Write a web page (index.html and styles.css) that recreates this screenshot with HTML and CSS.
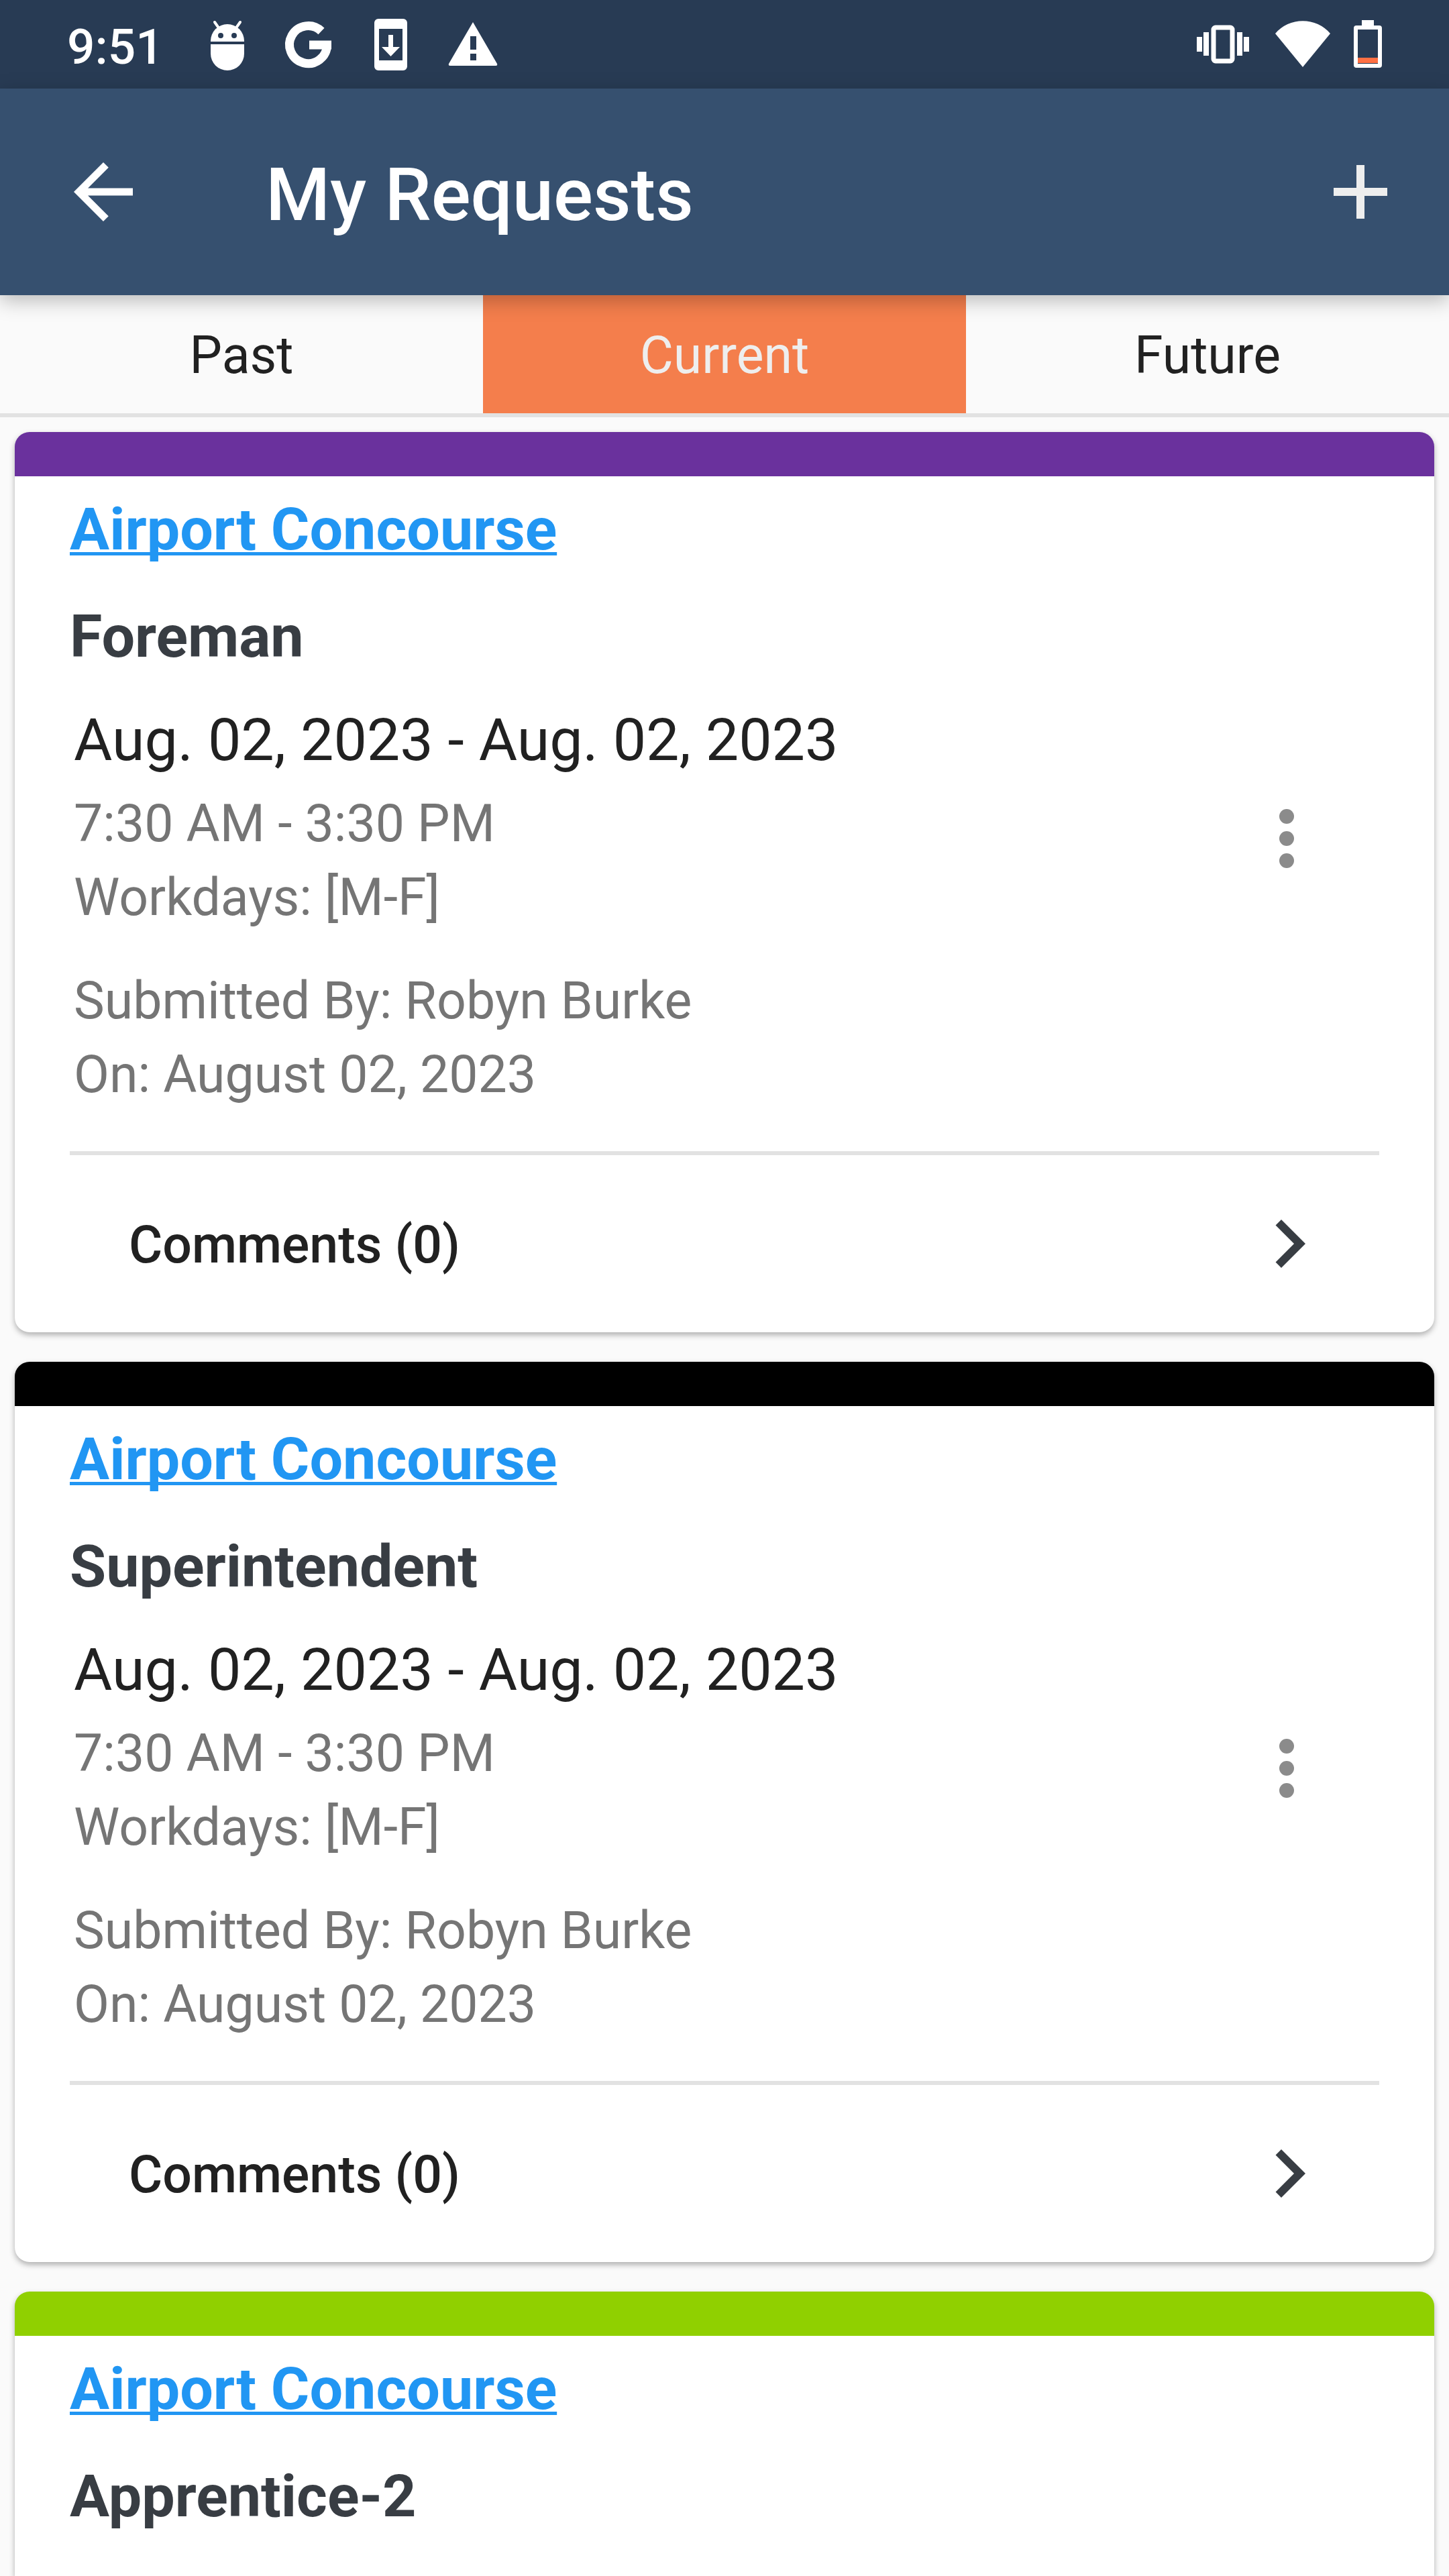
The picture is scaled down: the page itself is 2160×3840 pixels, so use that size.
FILE: index.html
```
<!DOCTYPE html>
<html lang="en">
<head>
  <meta charset="UTF-8" />
  <meta name="viewport" content="width=device-width, initial-scale=1.0" />
  <title>My Requests</title>
  <link rel="stylesheet" href="styles.css">
</head>
<body>

  <div class="status-bar">
    <span class="status-time">9:51</span>
    <div class="status-left">
      <!-- android -->
      <svg width="88" height="88" viewBox="0 0 88 88" fill="#fff">
        <path d="M19 40v-1a25 25 0 0 1 50 0v1z"/>
        <path d="M19 44h50v14a25 25 0 0 1-50 0z"/>
        <path d="M25 11l7 10M63 11l-7 10" stroke="#fff" stroke-width="4" stroke-linecap="round"/>
        <circle cx="34" cy="31" r="4" fill="#283b54"/>
        <circle cx="54" cy="31" r="4" fill="#283b54"/>
      </svg>
      <!-- google -->
      <svg width="88" height="88" viewBox="0 0 88 88" fill="none" stroke="#fff" stroke-width="13">
        <path d="M62 24.500A28 28 0 1 0 70.500 45"/>
        <path d="M44 45h33"/>
      </svg>
      <!-- system update -->
      <svg width="88" height="88" viewBox="0 0 88 88" fill="#fff">
        <path fill-rule="evenodd" d="M25 6h37a6 6 0 0 1 6 6v65a6 6 0 0 1-6 6H25a6 6 0 0 1-6-6V12a6 6 0 0 1 6-6zM26 21v47h35V21z"/>
        <path d="M40 30h7v18h10L43.500 62 30 48h10z"/>
      </svg>
      <!-- warning -->
      <svg width="88" height="88" viewBox="0 0 88 88" fill="#fff">
        <path fill-rule="evenodd" d="M44 11l36 62q1 3-2 3H10q-3 0-2-3zM40 32v20h9V32zM40 58v10h9V58z"/>
      </svg>
    </div>
    <div class="status-right">
      <!-- vibrate -->
      <svg width="82" height="58" viewBox="0 0 82 58" fill="#fff">
        <rect x="0" y="18" width="8" height="22"/>
        <rect x="10" y="11" width="8" height="35"/>
        <rect x="60" y="11" width="8" height="35"/>
        <rect x="70" y="18" width="8" height="22"/>
        <rect x="25" y="4" width="28" height="50" rx="3" fill="none" stroke="#fff" stroke-width="7"/>
      </svg>
      <!-- wifi -->
      <svg width="82" height="70" viewBox="0 0 82 70" fill="#fff">
        <path d="M0 19a54 54 0 0 1 82 0L41 69z"/>
      </svg>
      <!-- battery -->
      <svg width="42" height="72" viewBox="0 0 42 72" fill="#fff">
        <rect x="12" y="0" width="18" height="10"/>
        <rect x="3" y="11" width="36" height="57" rx="1" fill="none" stroke="#fff" stroke-width="6"/>
        <rect x="6" y="56" width="30" height="8" fill="#ff7043"/>
      </svg>
    </div>
  </div>

  <header class="app-bar">
    <button class="icon-btn" type="button" aria-label="Back">
      <svg width="132" height="132" viewBox="0 0 24 24" fill="#fff">
        <path d="M20 11H7.830l5.590-5.590L12 4l-8 8 8 8 1.410-1.410L7.830 13H20z"/>
      </svg>
    </button>
    <h1>My Requests</h1>
    <button class="icon-btn" type="button" aria-label="Add request">
      <svg width="132" height="132" viewBox="0 0 132 132" stroke="#eee" stroke-width="12">
        <path d="M66 26v80M26 66h80"/>
      </svg>
    </button>
  </header>

  <nav class="tabs">
    <button type="button">Past</button>
    <button type="button" class="active">Current</button>
    <button type="button">Future</button>
  </nav>

  <main class="requests">
    <article class="card foreman">
      <div class="card-body">
        <a class="project" href="#">Airport Concourse</a>
        <h2>Foreman</h2>
        <div class="details">
          <div class="details-text">
            <p class="dates">Aug. 02, 2023 - Aug. 02, 2023</p>
            <p>7:30 AM - 3:30 PM</p>
            <p>Workdays: [M-F]</p>
            <p class="submitted">Submitted By: Robyn Burke</p>
            <p>On: August 02, 2023</p>
          </div>
          <button class="icon-btn more" type="button" aria-label="More options">
            <svg width="132" height="132" viewBox="0 0 24 24" fill="#8b8b8b">
              <circle cx="12" cy="6" r="2"/><circle cx="12" cy="12" r="2"/><circle cx="12" cy="18" r="2"/>
            </svg>
          </button>
        </div>
        <button class="comments" type="button">
          <span>Comments (0)</span>
          <svg width="144" height="144" viewBox="0 0 24 24" fill="#383d43">
            <path d="M10 6L8.590 7.410 13.170 12l-4.580 4.590L10 18l6-6z"/>
          </svg>
        </button>
      </div>
    </article>

    <article class="card superintendent">
      <div class="card-body">
        <a class="project" href="#">Airport Concourse</a>
        <h2>Superintendent</h2>
        <div class="details">
          <div class="details-text">
            <p class="dates">Aug. 02, 2023 - Aug. 02, 2023</p>
            <p>7:30 AM - 3:30 PM</p>
            <p>Workdays: [M-F]</p>
            <p class="submitted">Submitted By: Robyn Burke</p>
            <p>On: August 02, 2023</p>
          </div>
          <button class="icon-btn more" type="button" aria-label="More options">
            <svg width="132" height="132" viewBox="0 0 24 24" fill="#8b8b8b">
              <circle cx="12" cy="6" r="2"/><circle cx="12" cy="12" r="2"/><circle cx="12" cy="18" r="2"/>
            </svg>
          </button>
        </div>
        <button class="comments" type="button">
          <span>Comments (0)</span>
          <svg width="144" height="144" viewBox="0 0 24 24" fill="#383d43">
            <path d="M10 6L8.590 7.410 13.170 12l-4.580 4.590L10 18l6-6z"/>
          </svg>
        </button>
      </div>
    </article>

    <article class="card apprentice">
      <div class="card-body">
        <a class="project" href="#">Airport Concourse</a>
        <h2>Apprentice-2</h2>
      </div>
    </article>
  </main>

</body>
</html>
```
FILE: styles.css
```
* {
    box-sizing: border-box;
}

body {
    margin: 0;
    min-height: 100vh;
    display: flex;
    flex-direction: column;
    background: #fafafa;
    color: #212121;
    font-family: Roboto, sans-serif;
    font-size: 77px;
}

h1, h2, p {
    margin: 0;
}

svg {
    display: block;
    flex: none;
}

button {
    padding: 0;
    border: none;
    background: none;
    color: inherit;
    font: inherit;
    cursor: pointer;
}

/* phone status bar */
.status-bar {
    display: flex;
    align-items: center;
    height: 132px;
    padding: 0 100px;
    background: #283b54;
    color: #fff;
}
.status-time {
    padding-top: 8px;
    margin-right: 51px;
    font-size: 73px;
    font-weight: 500;
}
.status-left {
    display: flex;
    gap: 34px;
}
.status-right {
    display: flex;
    align-items: center;
    gap: 35px;
    margin-left: auto;
}

/* title bar */
.app-bar {
    position: relative;
    z-index: 1;
    display: flex;
    align-items: center;
    height: 308px;
    padding: 0 66px 0 88px;
    background: #36506f;
    color: #fff;
    box-shadow: 0 8px 28px rgba(0, 0, 0, 0.26);
}
.app-bar h1 {
    flex: 1;
    padding-top: 8px;
    margin-left: 176px;
    font-size: 110px;
    font-weight: 500;
}

.tabs {
    display: grid;
    grid-template-columns: repeat(3, 1fr);
    border-bottom: 6px solid #e2e2e2;
}
.tabs button {
    height: 176px;
    padding-top: 4px;
}
.tabs .active {
    background: #f47e4c;
    color: #eee;
}

/* request cards */
.requests {
    flex: 1;
    display: flex;
    flex-direction: column;
    gap: 44px;
    padding: 22px 22px 0;
}
.card {
    border-top: 66px solid;
    border-radius: 22px;
    background: #fff;
    box-shadow: 0 4px 8px rgba(0, 0, 0, 0.3);
}
.card.foreman {
    border-color: #6a319d;
}
.card.superintendent {
    border-color: #000;
}
.card.apprentice {
    flex: 1;
    border-color: #90d000;
    border-radius: 22px 22px 0 0;
}
.card-body {
    padding: 27px 82px 0;
}
.project {
    display: inline-block;
    color: #2196f3;
    font-size: 88px;
    font-weight: bold;
    line-height: 104px;
    text-decoration-thickness: 5px;
    text-underline-offset: 4px;
    text-decoration-skip-ink: none;
    vertical-align: top;
}
.card h2 {
    margin-top: 56px;
    color: #383d43;
    font-size: 88px;
    line-height: 104px;
}

.details {
    display: flex;
    align-items: flex-start;
    justify-content: space-between;
    padding: 50px 72px 59px 6px;
    border-bottom: 6px solid #e2e2e2;
}
.details p {
    color: #757575;
    line-height: 110px;
}
.details .dates {
    margin-bottom: 18px;
    color: #212121;
    font-size: 88px;
    line-height: 104px;
}
.details .submitted {
    margin-top: 44px;
}
.more {
    margin-top: 133px;
}

.comments {
    display: flex;
    align-items: center;
    justify-content: space-between;
    width: 100%;
    height: 264px;
    padding: 0 62px 0 88px;
    font-weight: 500;
}
.comments span {
    padding-top: 4px;
}
```
